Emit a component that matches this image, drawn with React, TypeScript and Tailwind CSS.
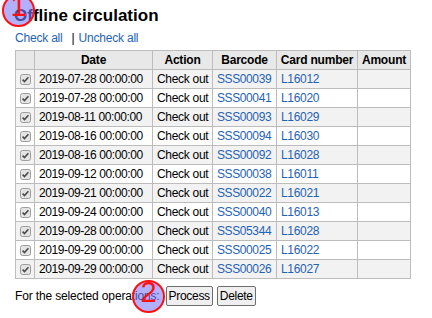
import React from "react";

const rows = [
  ["2019-07-28 00:00:00", "SSS00039", "L16012"],
  ["2019-07-28 00:00:00", "SSS00041", "L16020"],
  ["2019-08-11 00:00:00", "SSS00093", "L16029"],
  ["2019-08-16 00:00:00", "SSS00094", "L16030"],
  ["2019-08-16 00:00:00", "SSS00092", "L16028"],
  ["2019-09-12 00:00:00", "SSS00038", "L16011"],
  ["2019-09-21 00:00:00", "SSS00022", "L16021"],
  ["2019-09-24 00:00:00", "SSS00040", "L16013"],
  ["2019-09-28 00:00:00", "SSS05344", "L16028"],
  ["2019-09-29 00:00:00", "SSS00025", "L16022"],
  ["2019-09-29 00:00:00", "SSS00026", "L16027"],
];

const Checked = () => (
  <svg width="11" height="11" viewBox="0 0 11 11" className="block mx-auto">
    <rect x="0.5" y="0.5" width="10" height="10" rx="2" fill="#e4e4e4" stroke="#9c9c9c" />
    <path d="M2.6 5.6 L4.5 7.6 L8.4 3.2" fill="none" stroke="#4a4a4a" strokeWidth="1.6" />
  </svg>
);

const Marker: React.FC<{ n: string; className: string }> = ({ n, className }) => (
  <div
    className={`absolute w-[33px] h-[33px] rounded-full border-[2.5px] border-[#ff1010] bg-[rgba(125,125,255,0.6)] flex items-center justify-center ${className}`}
  >
    <span className="text-[29px] leading-none text-[#ff1010] -translate-y-[4px]">{n}</span>
  </div>
);

const th = "border border-[#bcbcbc] bg-[#e8e8e8] font-bold text-center px-[2px] whitespace-nowrap tracking-[-0.2px]";
const td = "border border-[#bcbcbc] px-[4px] whitespace-nowrap overflow-hidden";

export default function App() {
  return (
    <div className="relative w-[432px] h-[318px] overflow-hidden bg-white text-black text-[12px] leading-[14px] px-[15px] font-['Liberation_Sans',Arial,sans-serif]">
      <h1 className="mt-[6px] ml-[-1px] text-[17px] leading-[20px] font-bold">Offline circulation</h1>
      <div className="mt-[5px] text-[12px] leading-[14px] tracking-[-0.2px]">
        <a href="#" className="text-[#1f63b5]">Check all</a>
        <span className="ml-[9px] mr-[4px]">|</span>
        <a href="#" className="text-[#1f63b5]">Uncheck all</a>
      </div>

      <table className="mt-[5px] w-[395px] table-fixed border-collapse">
        <colgroup>
          <col className="w-[19px]" />
          <col className="w-[118px]" />
          <col className="w-[60px]" />
          <col className="w-[64px]" />
          <col className="w-[81px]" />
          <col className="w-[53px]" />
        </colgroup>
        <thead>
          <tr className="h-[19px]">
            <th className={th}></th>
            <th className={th}>Date</th>
            <th className={th}>Action</th>
            <th className={th}>Barcode</th>
            <th className={th}>Card number</th>
            <th className={th}>Amount</th>
          </tr>
        </thead>
        <tbody>
          {rows.map((r, i) => (
            <tr key={i} className={`h-[19px] ${i % 2 === 0 ? "bg-[#f2f2f2]" : "bg-white"}`}>
              <td className="border border-[#bcbcbc] p-0">
                <Checked />
              </td>
              <td className={`${td} tracking-[-0.4px]`}>{r[0]}</td>
              <td className={`${td} tracking-[-0.3px]`}>Check out</td>
              <td className={`${td} tracking-[-0.4px]`}>
                <a href="#" className="text-[#1f63b5]">{r[1]}</a>
              </td>
              <td className={`${td} tracking-[-0.3px]`}>
                <a href="#" className="text-[#1f63b5]">{r[2]}</a>
              </td>
              <td className={td}></td>
            </tr>
          ))}
        </tbody>
      </table>

      <div className="mt-[7px] flex items-center">
        <span className="tracking-[-0.15px]">For the selected operations:</span>
        <button className="ml-[6px] h-[20px] px-[2px] border border-[#6e6e6e] rounded-[2px] bg-[#efefef] text-[12px] leading-[14px] tracking-[-0.3px]">
          Process
        </button>
        <button className="ml-[4px] h-[20px] px-[2px] border border-[#6e6e6e] rounded-[2px] bg-[#efefef] text-[12px] leading-[14px] tracking-[-0.3px]">
          Delete
        </button>
      </div>

      <Marker n="1" className="left-[2px] top-[-6px]" />
      <Marker n="2" className="left-[132px] top-[280px]" />
    </div>
  );
}
